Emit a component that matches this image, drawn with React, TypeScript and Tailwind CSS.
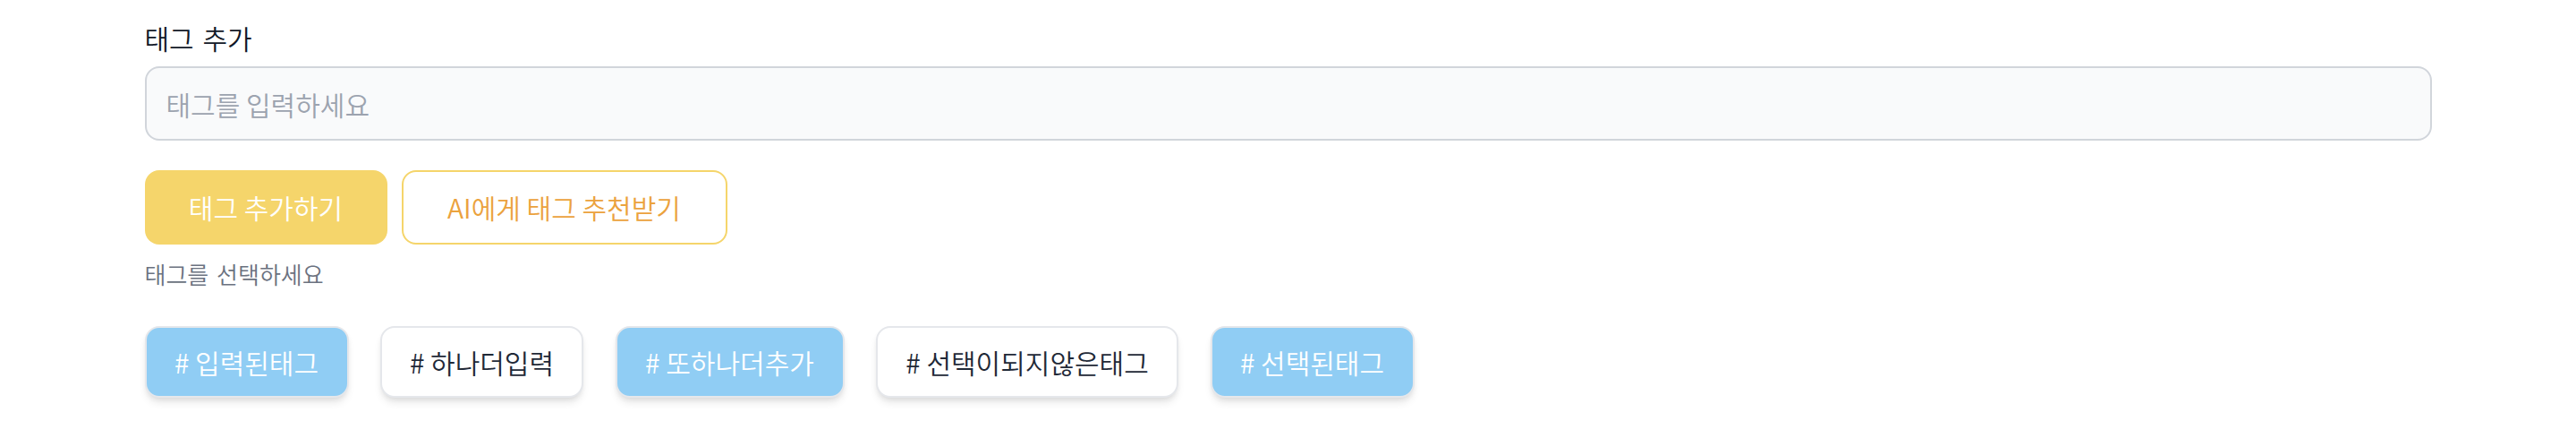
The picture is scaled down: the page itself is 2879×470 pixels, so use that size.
import React from "react";

const tags: { label: string; selected: boolean; w: string }[] = [
  { label: "# 입력된태그", selected: true, w: "w-[228px]" },
  { label: "# 하나더입력", selected: false, w: "w-[227px]" },
  { label: "# 또하나더추가", selected: true, w: "w-[256px]" },
  { label: "# 선택이되지않은태그", selected: false, w: "w-[338px]" },
  { label: "# 선택된태그", selected: true, w: "w-[228px]" },
];

export default function App() {
  return (
    <div
      className="min-h-screen bg-white font-[350] [word-spacing:3px]"
      style={{ fontFamily: '"Noto Sans CJK KR", sans-serif' }}
    >
      <div className="mx-auto w-[2556px] pt-[20px]">
        <label className="block text-[30px] leading-[45px] text-[#111827]">태그 추가</label>
        <input
          className="mt-[9px] block h-[83px] w-full rounded-[16px] border-2 border-[#d1d5db] bg-[#f9fafb] px-[22px] text-[30px] text-[#111827] outline-none placeholder:text-[#9ca3af]"
          placeholder="태그를 입력하세요"
        />
        <div className="mt-[33px] flex gap-[16px]">
          <button className="flex h-[83px] w-[271px] items-center justify-center rounded-[16px] bg-[#f5d56b] text-[30px] text-white">
            태그 추가하기
          </button>
          <button className="flex h-[83px] w-[364px] items-center justify-center rounded-[16px] border-2 border-[#f5d56b] bg-white text-[30px] text-[#eba23d]">
            AI에게 태그 추천받기
          </button>
        </div>
        <p className="mt-[15px] text-[26px] leading-[36px] text-[#6b7280]">태그를 선택하세요</p>
        <div className="mt-[40px] flex gap-[35.5px]">
          {tags.map((t) => (
            <button
              key={t.label}
              className={
                (t.selected
                  ? "bg-[#90cdf4] text-white "
                  : "bg-white text-[#1f2937] ") +
                t.w +
                " flex h-[80px] items-center justify-center rounded-[16px] border-2 border-[#e5e7eb] text-[30px] shadow-[0_7px_10px_-2px_rgba(0,0,0,0.1),0_3px_7px_-3px_rgba(0,0,0,0.1)]"
              }
            >
              {t.label}
            </button>
          ))}
        </div>
      </div>
    </div>
  );
}
